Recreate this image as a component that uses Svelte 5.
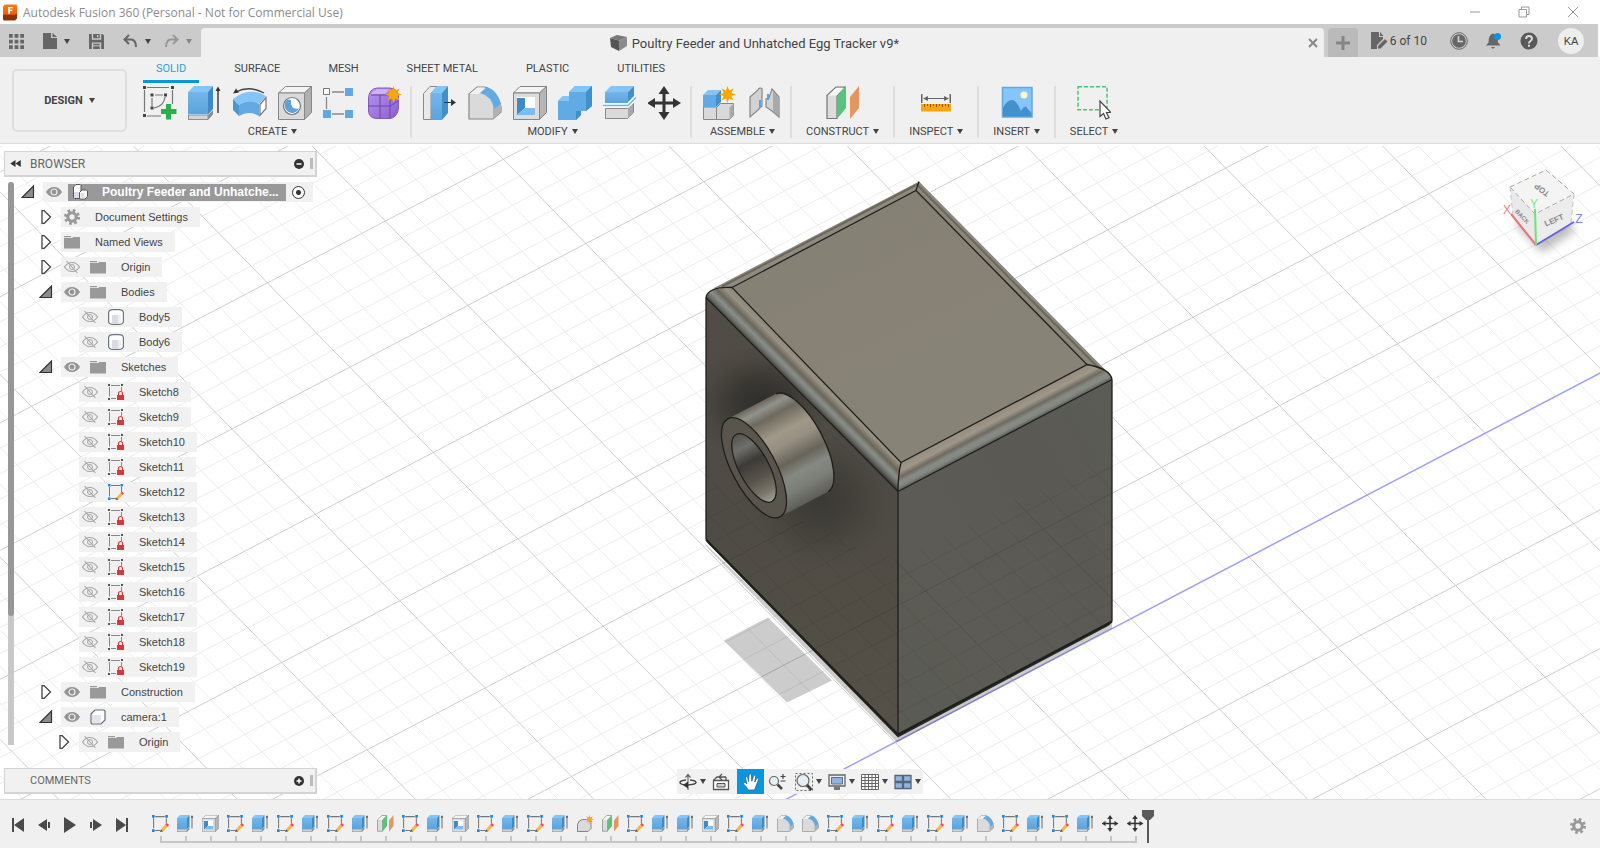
<script lang="ts">
  interface TreeRow {
    /** Text shown beside the icon. */
    label: string;
    /** Nesting level, 0 is the root. */
    depth: number;
    /** Symbol drawn before the label. */
    icon: string;
    /** Expander state, left out for leaf rows. */
    open?: boolean;
    /** Visibility eye, left out for rows that have none. */
    visible?: boolean;
  }

  interface ToolGroup {
    label: string;
    icons: string[];
  }

  const tabs = ['SOLID', 'SURFACE', 'MESH', 'SHEET METAL', 'PLASTIC', 'UTILITIES'];
  let activeTab = $state('SOLID');

  const groups: ToolGroup[] = [
    { label: 'CREATE', icons: ['new-sketch', 'extrude', 'sweep', 'hole', 'pattern', 'form'] },
    { label: 'MODIFY', icons: ['press-pull', 'fillet', 'shell', 'combine', 'split', 'move'] },
    { label: 'ASSEMBLE', icons: ['component-new', 'joint'] },
    { label: 'CONSTRUCT', icons: ['plane'] },
    { label: 'INSPECT', icons: ['measure'] },
    { label: 'INSERT', icons: ['picture'] },
    { label: 'SELECT', icons: ['select'] },
  ];

  const sketches: TreeRow[] = [8, 9, 10, 11, 12, 13, 14, 15, 16, 17, 18, 19].map((n) => ({
    label: `Sketch${n}`,
    depth: 2,
    icon: n === 12 ? 'sketch' : 'sketch-locked',
    visible: false,
  }));

  const rows: TreeRow[] = [
    { label: 'Document Settings', depth: 1, icon: 'gear', open: false },
    { label: 'Named Views', depth: 1, icon: 'folder', open: false },
    { label: 'Origin', depth: 1, icon: 'folder', open: false, visible: false },
    { label: 'Bodies', depth: 1, icon: 'folder', open: true, visible: true },
    { label: 'Body5', depth: 2, icon: 'body', visible: false },
    { label: 'Body6', depth: 2, icon: 'body', visible: false },
    { label: 'Sketches', depth: 1, icon: 'folder', open: true, visible: true },
    ...sketches,
    { label: 'Construction', depth: 1, icon: 'folder', open: false, visible: true },
    { label: 'camera:1', depth: 1, icon: 'component', open: true, visible: true },
    { label: 'Origin', depth: 2, icon: 'folder', open: false, visible: false },
  ];

  // One letter per timeline feature
  const featureIcons: Record<string, string> = {
    k: 'sketch',
    e: 'extrude',
    s: 'shell',
    p: 'plane',
    n: 'form-new',
    f: 'fillet',
    m: 'move',
  };
  const features = [...'keskekekepkeskekenpkeeskeffkekekefkekemm'].map((c) => featureIcons[c]);

  const playback = ['first', 'prev', 'play', 'next', 'last'];

  /**
   * Screen point of a ground grid node. The far cells come out a bit smaller.
   */
  function node(m: number, n: number): [number, number] {
    const k = n / (1 - n * 0.006);
    return [1013 + m * 118 + k * 88, 680 - m * 61.8 + k * 90];
  }

  function gridLine(a: [number, number], b: [number, number]): string {
    return `M${a[0].toFixed(1)} ${a[1].toFixed(1)}L${b[0].toFixed(1)} ${b[1].toFixed(1)}`;
  }

  let minor = '';
  let major = '';
  for (let i = -60; i <= 60; i++) {
    const t = i / 5;
    const line = gridLine(node(t, -14), node(t, 14)) + (i === 0 ? '' : gridLine(node(-14, t), node(14, t)));
    if (i % 5 === 0) major += line;
    else minor += line;
  }
  const axis = gridLine(node(-14, 0), node(14, 0));
</script>

<!-- Symbols shared by the ribbon, the browser tree and the timeline -->
<svg class="sprite" aria-hidden="true">
  <defs>
    <linearGradient id="g-blue" x1="0" y1="0" x2="0" y2="1">
      <stop offset="0" stop-color="#74b6ea" />
      <stop offset="1" stop-color="#5aa3dc" />
    </linearGradient>
    <linearGradient id="g-purple" x1="0" y1="0" x2="1" y2="1">
      <stop offset="0" stop-color="#b894ee" />
      <stop offset="1" stop-color="#8a5fce" />
    </linearGradient>
    <linearGradient id="g-logo" x1="0" y1="0" x2="0" y2="1">
      <stop offset="0" stop-color="#ff7a12" />
      <stop offset="1" stop-color="#e8590c" />
    </linearGradient>
  </defs>

  <symbol id="star" viewBox="0 0 18 18">
    <path fill="#f9a50b" d="M9 0l1.700 4.800L15.400 2.600 13.200 7.300 18 9l-4.800 1.700 2.200 4.700-4.700-2.200L9 18l-1.700-4.800-4.700 2.200 2.200-4.700L0 9l4.800-1.700L2.600 2.600l4.700 2.200z" />
  </symbol>

  <symbol id="new-sketch" viewBox="0 0 34 34">
    <path fill="none" stroke="#777" stroke-width="1.200" d="M4 1.500h22M1.500 4v22M29.500 4v14M4 30h14M12 9h8M9 12v8M22 11q-1 9-11 11" />
    <path fill="#444" d="M0 0h3v3H0zM28 0h3v3h-3zM0 28h3v3H0zM7.500 7.500h3v3h-3zM21 7.500h3v3h-3zM7.500 20.500h3v3h-3z" />
    <path fill="#27b04b" d="M23 18h5v5h5.500v5H28v5.500h-5V28h-5v-5h5z" />
  </symbol>
  <symbol id="extrude" viewBox="0 0 34 34">
    <path fill="#8d8d8d" d="M0 29h20l5-5v4.500L20 34H0z" />
    <path fill="#d4d4d4" d="M1 29.500h18.500v3.500H1z" />
    <path fill="url(#g-blue)" d="M0 6h20v22.500H0z" />
    <path fill="#84c5f7" d="M0 6l6-6h19l-5 6z" />
    <path fill="#3d8cc7" d="M20 6l5-6v23l-5 5.500z" />
    <path fill="#333" d="M29.300 27V5H27.500L30 .500 32.500 5h-1.800v22z" />
  </symbol>
  <symbol id="sweep" viewBox="0 0 34 34">
    <path fill="#4a98d3" d="M0 13l6 6v11l-6-6z" />
    <path fill="#84c5f7" d="M0 13Q16 0 33 10l-7 8q-10-6-20 1z" />
    <path fill="#63aae2" d="M6 19q10-7 20-1v12q-10-6-20 0z" />
    <path fill="#fff" stroke="#777" stroke-width="1.200" d="M27 18.500l6-7v11l-6 7z" />
    <path fill="none" stroke="#444" stroke-width="1.300" d="M3 6Q16-1 31 7" />
    <path fill="#333" d="M0 7.500l3-5 3 4z" />
  </symbol>
  <symbol id="hole" viewBox="0 0 34 34">
    <path fill="#f4f4f4" stroke="#888" d="M.500 7l7-6.500h26l-7 6.500z" />
    <path fill="#b0b0b0" stroke="#888" d="M26.500 7l7-6.500v26l-7 7z" />
    <path fill="#dadada" stroke="#888" d="M.500 7h26v26.500H.500z" />
    <circle cx="14" cy="20" r="8.500" fill="#fff" stroke="#777" stroke-width="1.200" />
    <path fill="#5aa3dc" d="M9 14a7.500 7.500 0 1 0 12 8.500Q12 24 13 14q-2-1-4 0z" />
  </symbol>
  <symbol id="pattern" viewBox="0 0 34 34">
    <path fill="none" stroke="#888" stroke-width="1.300" d="M9 6h12M3.500 11v12M9 28h12" />
    <path fill="#fff" stroke="#777" d="M.500 2.500h6v6h-6z" />
    <path fill="#5fa8e2" d="M22 2h8v8h-8zM0 24h8v8H0zM22 24h8v8h-8z" />
  </symbol>
  <symbol id="form" viewBox="0 0 34 34">
    <path fill="url(#g-purple)" stroke="#8259c4" d="M.500 12Q1 3 9 2h13q8 1 8.500 8v12q-1 9-8 10.500H8Q1 32 .500 25z" />
    <path fill="#cdb2f7" d="M3 8q3-5 8-5h11l-5 5z" />
    <path fill="none" stroke="#6d45ad" d="M0 20h22l8-5M12 9v23M22 10v22M3 9h19" />
    <use href="#star" x="17" y="0" width="17" height="17" />
  </symbol>
  <symbol id="press-pull" viewBox="0 0 34 34">
    <path fill="#e9e9e9" stroke="#888" d="M.500 7.500L7 .500h7l-6 7V33.500H.500z" />
    <path fill="#84c5f7" d="M8 7l6-7h11l-6 7z" />
    <path fill="url(#g-blue)" d="M8 7h11v27H8z" />
    <path fill="#4290cb" d="M19 7l6-7v27l-6 7z" />
    <path fill="#333" d="M21 16h7v-3l5 3.500-5 3.500v-3h-7z" />
  </symbol>
  <symbol id="fillet" viewBox="0 0 34 34">
    <path fill="#dadada" stroke="#858585" stroke-width="1.200" d="M1 33V8l8-7h8q12 4 16 20v5l-8 7z" />
    <path fill="#f1f1f1" d="M1.500 8L9 1.600h8l-6 6.400z" />
    <path fill="#b2b2b2" d="M25 22l8-5v9l-8 7z" />
    <path fill="#62aae4" d="M12 7l7-6q11 4 14 17l-7 5Q24 10 12 7z" />
  </symbol>
  <symbol id="shell" viewBox="0 0 34 34">
    <path fill="#f4f4f4" stroke="#858585" d="M.500 7L7 .500h26.500L26.500 7z" />
    <path fill="#b5b5b5" stroke="#858585" d="M26.500 7l7-6.500v26l-7 7z" />
    <path fill="#dcdcdc" stroke="#858585" d="M.500 7h26v26.500H.500z" />
    <path fill="#fff" d="M4 11h18v18H4z" />
    <path fill="#3d8cc7" d="M4 12h8v10l-8 7z" />
    <path fill="#7abdf2" d="M12 22h10v7H4z" />
  </symbol>
  <symbol id="combine" viewBox="0 0 34 34">
    <path fill="#62aae4" d="M0 15l5-5h6V6l6-6h17v20l-6 5h-5v4l-5 5H0z" />
    <path fill="#84c5f7" d="M11 6l6-6h17l-6 6zM0 15l5-5h6v5z" />
    <path fill="#4290cb" d="M28 6l6-6v20l-6 5zM23 25v4l-5 5v-9z" />
  </symbol>
  <symbol id="split" viewBox="0 0 34 34">
    <path fill="#dadada" stroke="#888" d="M2.500 22.500h22l6-5v9l-6 6h-22z" />
    <path fill="#aaa" d="M25 22l5-4v9l-5 5z" />
    <path fill="#84c5f7" d="M2 6l6-6h23l-6 6z" />
    <path fill="url(#g-blue)" d="M2 6h23v11H2z" />
    <path fill="#4290cb" d="M25 6l6-6v10l-6 6z" />
    <path fill="none" stroke="#fff" stroke-width="4" d="M0 19.500h25l8-8" />
    <path fill="none" stroke="#6bb5ee" stroke-width="1.500" d="M0 19.500h25l8-8" />
  </symbol>
  <symbol id="move" viewBox="0 0 34 34">
    <path fill="#333" d="M16 0l5.500 8h-4v7.500H25V12l8 5-8 5v-3.500h-7.500V26h4L16 34l-5.500-8h4v-7.500H7V22l-8-5 8-5v3.500h7.500V8h-4z" />
  </symbol>
  <symbol id="component-new" viewBox="0 0 34 34">
    <path fill="#d9d9d9" stroke="#888" d="M.500 21h13v12.500H.500zM13.500 21.500l4-4h13v12l-4 4h-13z" />
    <path fill="#aaa" d="M26.500 21.500l4-4v12l-4 4z" />
    <path fill="#84c5f7" d="M0 9l5-5h13l-5 5z" />
    <path fill="#62aae4" d="M0 9h13v12H0z" />
    <path fill="#4290cb" d="M13 9l5-5v12l-5 5z" />
    <use href="#star" x="16" y="0" width="17" height="17" />
  </symbol>
  <symbol id="joint" viewBox="0 0 34 34">
    <path fill="#d2d2d2" stroke="#888" stroke-width="1.200" d="M2 11l8-7q1-3 4-1.500V20l-4 4-8 7zM31 31l-7-6-6-4v-8l3-1 3-9 7 8z" />
    <path fill="#a9a9a9" d="M25 6l5.500 5v19L25 25z" />
    <path fill="#5aa3dc" d="M11 14h2v8h-2zM19 8h2v6h-2z" />
  </symbol>
  <symbol id="plane" viewBox="0 0 34 34">
    <path fill="#dcdcdc" stroke="#777" stroke-width="1.200" d="M1 9.500L10 1h9l-8 9v22.500H1z" />
    <path fill="#f8f8f8" d="M2 9.500L10 2h8l-7.500 7.500z" />
    <path fill="#58c37b" d="M11 10l9-10v22l-9 11z" />
    <path fill="#e59560" d="M24 11l9-11v22l-9 11z" />
  </symbol>
  <symbol id="measure" viewBox="0 0 34 34">
    <path fill="#666" d="M2 8h1.500v9H2zM30.500 8H32v9h-1.500zM4 12.500L9 10v2h16v-2l5 2.500-5 2.500v-2H9v2z" />
    <path fill="#f9a50b" d="M2 18h30v7.500H2z" />
    <path stroke="#8a5a00" stroke-width="1" d="M5.500 18v3M8.500 18v2M11.500 18v3M14.500 18v2M17.500 18v3M20.500 18v2M23.500 18v3M26.500 18v2M29.500 18v3" />
  </symbol>
  <symbol id="picture" viewBox="0 0 34 34">
    <path fill="#86c5fa" stroke="#62a9e2" stroke-width="1.500" d="M2.500 1.500h29.500v29.500H2.500z" />
    <path fill="#4291cd" d="M3 22q4-8 9-8 5 1 9 11l2-3q3-3 4 0l4.500 5v3.500H3z" />
    <circle cx="24" cy="9" r="3.500" fill="#fdf7cf" />
  </symbol>
  <symbol id="select" viewBox="0 0 34 34">
    <path fill="none" stroke="#43c771" stroke-width="1.500" stroke-dasharray="4 2" d="M1 .800h29v23H1z" />
    <path fill="#fff" stroke="#444" stroke-width="1.200" d="M23 15v15.500l3.500-3 2.500 5.500 3-1.300-2.500-5.200h4.500z" />
  </symbol>
  <symbol id="form-new" viewBox="0 0 34 34">
    <path fill="#dadada" stroke="#858585" stroke-width="2" d="M1 33V19q2-9 10-10h12q5 1 5 6v12l-6 6z" />
    <use href="#star" x="16" y="0" width="18" height="18" />
  </symbol>
  <symbol id="sketch" viewBox="0 0 16 16">
    <path fill="none" stroke="#777" d="M3 1.500h9M1.500 3v9.500M13.500 3v5M3 14.500h5" />
    <path fill="#1b87dd" d="M0 0h2.500v2.500H0zM12.500 0H15v2.500h-2.500zM0 13.500h2.500V16H0z" />
    <path fill="#fbb53c" d="M8.500 13.500l4-4.500 2 2-4 4.500z" />
    <path fill="#f0485c" d="M12.500 9l1.500-1.500L16 9.500 14.500 11z" />
    <path fill="#555" d="M8.500 13.500l2 2-3 .500z" />
  </symbol>
  <symbol id="sketch-locked" viewBox="0 0 16 16">
    <path fill="none" stroke="#888" d="M3 1.500h9M1.500 3v9.500M13.500 3v4M3 14.500h5" />
    <path fill="#555" d="M0 0h2v2H0zM13 0h2v2h-2zM0 14h2v2H0z" />
    <path fill="#d33a40" d="M9 11h7v5H9z" />
    <path fill="none" stroke="#d33a40" stroke-width="1.200" d="M10.500 11V9.500a2 2 0 0 1 4 0V11" />
  </symbol>
  <symbol id="gear" viewBox="0 0 16 16">
    <circle cx="8" cy="8" r="6.500" fill="none" stroke="#999" stroke-width="3" stroke-dasharray="2.550 2.550" />
    <circle cx="8" cy="8" r="4.200" fill="none" stroke="#999" stroke-width="3" />
  </symbol>
  <symbol id="folder" viewBox="0 0 16 16">
    <path fill="#999" d="M0 2h7v1.200H0zM0 4h8l1.500-1H16v11.500H0z" />
  </symbol>
  <symbol id="body" viewBox="0 0 16 16">
    <path fill="#fff" stroke="#6c7483" stroke-width="1.200" d="M.600 3.500Q1 .600 5 .600h6q4 0 4.400 2.900v9q-.400 2.900-4.400 2.900H5q-4 0-4.400-2.900z" />
    <path fill="#d9dce4" d="M4 6h6v8H4z" />
    <path fill="#eceef2" d="M10 6h3v7l-3 1z" />
  </symbol>
  <symbol id="component" viewBox="0 0 16 16">
    <path fill="#fff" stroke="#666d78" stroke-width="1.200" d="M1 5l4-4h9l1 1v9l-4 4H2l-1-1z" />
    <path fill="#e3e5ea" d="M2 6h9v8H2z" />
  </symbol>
  <symbol id="components" viewBox="0 0 16 16">
    <path fill="#fff" stroke="#555" d="M1.500 3l2.500-2.500h4L9 1.500V14.500H2.500l-1-1z" />
    <path fill="#fff" stroke="#555" d="M7.500 8.500L10 6h4.500l1 1v5.500l-2.500 2.500H8.500l-1-1z" />
    <path fill="#dcdfe6" d="M2 8h5v6H2zM8.500 9h4v5.500h-4z" />
  </symbol>
  <symbol id="eye" viewBox="0 0 16 16">
    <path fill="#949494" d="M0 8q3-5 8-5t8 5q-3 5-8 5T0 8z" />
    <circle cx="8" cy="8" r="3" fill="none" stroke="#eee" stroke-width="1.200" />
  </symbol>
  <symbol id="eye-off" viewBox="0 0 16 16">
    <path fill="none" stroke="#a5a5a5" stroke-width="1.100" d="M.500 8Q3.500 3.500 8 3.500T15.500 8q-3 4.500-7.500 4.500T.500 8zM2.500 2l11 12" />
    <circle cx="8" cy="8" r="2.500" fill="none" stroke="#a5a5a5" />
  </symbol>
  <symbol id="first" viewBox="0 0 16 16"><path fill="#4a4a4a" d="M2 1h2v14H2zM14 1v14L4 8z" /></symbol>
  <symbol id="prev" viewBox="0 0 16 16"><path fill="#4a4a4a" d="M11 2v12L2 8zM12 5h2v6h-2z" /></symbol>
  <symbol id="play" viewBox="0 0 16 16"><path fill="#4a4a4a" d="M2 0l12 8-12 8z" /></symbol>
  <symbol id="next" viewBox="0 0 16 16"><path fill="#4a4a4a" d="M5 2v12l9-6zM2 5h2v6H2z" /></symbol>
  <symbol id="last" viewBox="0 0 16 16"><path fill="#4a4a4a" d="M12 1h2v14h-2zM2 1v14l10-7z" /></symbol>
</svg>

{#snippet icon(name: string)}
  <svg class="icon" aria-hidden="true"><use href="#{name}" /></svg>
{/snippet}

<div class="app">
  <header class="titlebar">
    <svg class="logo" viewBox="0 0 16 17" aria-hidden="true">
      <path fill="url(#g-logo)" d="M2 0h12l1 1v11l-3 1H0V2z" />
      <path fill="#8b3306" d="M0 11h12l3-1v5l-2 2H1l-1-1z" />
      <path fill="#fff" d="M5.500 2.500h5V4h-3v1.500h2.500V7H7.500v2.500h-2z" />
    </svg>
    <span class="app-name">Autodesk Fusion 360 (Personal - Not for Commercial Use)</span>
    <div class="window-buttons">
      <button aria-label="Minimize"><svg viewBox="0 0 12 12"><path d="M1 6h10" /></svg></button>
      <button aria-label="Restore"><svg viewBox="0 0 12 12"><path d="M1 3.500h7.500V11H1zM3.500 3.500V1H11v7.500H8.500" /></svg></button>
      <button aria-label="Close"><svg viewBox="0 0 12 12"><path d="M1 1l10 10M11 1L1 11" /></svg></button>
    </div>
  </header>

  <div class="tabbar">
    <div class="quick">
      <button aria-label="Data panel">
        <svg width="15" height="15" viewBox="0 0 16 16"><path fill="#666" d="M0 0h4v4H0zM6 0h4v4H6zM12 0h4v4h-4zM0 6h4v4H0zM6 6h4v4H6zM12 6h4v4h-4zM0 12h4v4H0zM6 12h4v4H6zM12 12h4v4h-4z" /></svg>
      </button>
      <button aria-label="File">
        <svg width="14" height="16" viewBox="0 0 14 16"><path fill="#666" d="M0 0h8v5h6v11H0zM9.500 0L14 4H9.500z" /></svg>
        <span class="caret"></span>
      </button>
      <button aria-label="Save">
        <svg width="15" height="15" viewBox="0 0 16 16"><path fill="#666" fill-rule="evenodd" d="M0 0h3v6h10V0h1.500L16 1.500V16h-3V9H3v7H0zM4.500 0h7v4.500h-7zM8.500 1v2.500H10V1zM4.500 10.500h7V12h-7zM4.500 13h7v3h-7z" /></svg>
      </button>
      <button aria-label="Undo">
        <svg width="15" height="14" viewBox="0 0 15 14"><path fill="none" stroke="#666" stroke-width="2" d="M6 1L1.500 5.500 6 10M2 5.500h6q5 0 5 7.500" /></svg>
        <span class="caret"></span>
      </button>
      <button class="faded" aria-label="Redo">
        <svg width="15" height="14" viewBox="0 0 15 14"><path fill="none" stroke="#666" stroke-width="2" d="M9 1l4.500 4.500L9 10M13 5.500H7q-5 0-5 7.500" /></svg>
        <span class="caret"></span>
      </button>
    </div>

    <div class="doc-tab">
      <span class="doc-name">
        <svg width="17" height="16" viewBox="0 0 17 16" aria-hidden="true">
          <path fill="#555" d="M0 3l9 2.500V16l-8-4z" /><path fill="#777" d="M0 3l7-3 10 2-8 3.500z" /><path fill="#8c8c8c" d="M9 5.500L17 2v9l-8 5z" />
        </svg>
        Poultry Feeder and Unhatched Egg Tracker v9*
      </span>
      <button aria-label="Close tab"><svg width="10" height="10" viewBox="0 0 10 10"><path stroke="#888" stroke-width="2" d="M1 1l8 8M9 1L1 9" /></svg></button>
    </div>
    <button class="new-tab" aria-label="New tab"><svg width="14" height="14" viewBox="0 0 14 14"><path stroke="#858585" stroke-width="3" d="M7 0v14M0 7h14" /></svg></button>

    <div class="account">
      <button class="quota">
        <svg width="17" height="17" viewBox="0 0 17 17"><path fill="#666" d="M0 0h8v5h4v2l-6 6v4H0zM9 0l3.500 4H9zM7 14l7-7 2.500 2.500-7 7H7z" /></svg>
        6 of 10
      </button>
      <button aria-label="Job status"><svg width="18" height="18" viewBox="0 0 18 18"><circle cx="9" cy="9" r="8.300" fill="none" stroke="#666" /><circle cx="9" cy="9" r="6.800" fill="#666" /><path fill="none" stroke="#d2d2d2" stroke-width="1.700" d="M8.500 4v5.500H13" /></svg></button>
      <button aria-label="Notifications"><svg width="18" height="18" viewBox="0 0 18 18"><path fill="#666" d="M1 13.500l2.500-3q0-8 4.500-9 5 1 5 9l2.500 3zM6 15h4q-2 3.500-4 0z" /><circle cx="12.500" cy="4.500" r="3.500" fill="#0a96dd" /></svg></button>
      <button aria-label="Help"><svg width="18" height="18" viewBox="0 0 18 18"><circle cx="9" cy="9" r="8.500" fill="#595959" /><path fill="none" stroke="#ddd" stroke-width="2" d="M6 7q.300-3 3-3t3 2.500q0 1.500-1.500 2.500T9 11.500M9 12.800v2" /></svg></button>
      <button class="avatar">KA</button>
    </div>
  </div>

  <div class="ribbon">
    <button class="workspace">DESIGN <span class="caret"></span></button>
    <div class="tools">
      <nav class="tabs">
        {#each tabs as tab}
          <button class:active={tab === activeTab} onclick={() => (activeTab = tab)}>{tab}</button>
        {/each}
      </nav>
      <div class="groups">
        {#each groups as group}
          <section class="group">
            <div class="group-icons">
              {#each group.icons as name}
                <button aria-label={name}>{@render icon(name)}</button>
              {/each}
            </div>
            <button class="group-label">{group.label}<span class="caret"></span></button>
          </section>
        {/each}
      </div>
    </div>
  </div>

  <main class="canvas">
    <!-- Ground grid and the model -->
    <svg class="scene" viewBox="0 145 1600 654" preserveAspectRatio="xMidYMid slice" aria-hidden="true">
      <defs>
        <linearGradient id="m-top" x1="0" y1="0" x2="0.600" y2="1">
          <stop offset="0" stop-color="#848074" /><stop offset="0.500" stop-color="#888276" /><stop offset="1" stop-color="#878377" />
        </linearGradient>
        <linearGradient id="m-left" x1="0" y1="0" x2="0" y2="1">
          <stop offset="0" stop-color="#514d46" /><stop offset="0.500" stop-color="#4e4b44" /><stop offset="1" stop-color="#555148" />
        </linearGradient>
        <linearGradient id="m-right" x1="1" y1="0" x2="0" y2="1">
          <stop offset="0" stop-color="#5a5c55" /><stop offset="0.300" stop-color="#5b5954" /><stop offset="0.700" stop-color="#5c5b55" /><stop offset="1" stop-color="#595b54" />
        </linearGradient>
        <radialGradient id="m-shade">
          <stop offset="0" stop-color="#2f2d2a" /><stop offset="0.400" stop-color="#2f2d2a" stop-opacity="0.650" /><stop offset="0.750" stop-color="#2f2d2a" stop-opacity="0.180" /><stop offset="1" stop-color="#2f2d2a" stop-opacity="0" />
        </radialGradient>
        <linearGradient id="m-edge-l" gradientUnits="userSpaceOnUse" x1="800" y1="392" x2="817" y2="375">
          <stop offset="0" stop-color="#3d3d39" /><stop offset="0.150" stop-color="#686a65" /><stop offset="0.350" stop-color="#8b8f89" /><stop offset="0.580" stop-color="#6b665b" /><stop offset="0.850" stop-color="#999386" /><stop offset="1" stop-color="#8f897c" />
        </linearGradient>
        <linearGradient id="m-edge-r" gradientUnits="userSpaceOnUse" x1="1000" y1="437" x2="989" y2="416">
          <stop offset="0" stop-color="#62635e" /><stop offset="0.150" stop-color="#858781" /><stop offset="0.300" stop-color="#888b85" /><stop offset="0.480" stop-color="#6f6a60" /><stop offset="0.700" stop-color="#9e978a" /><stop offset="1" stop-color="#938c7f" />
        </linearGradient>
        <linearGradient id="m-tube" gradientUnits="userSpaceOnUse" x1="752" y1="406" x2="804" y2="504">
          <stop offset="0" stop-color="#6c675d" /><stop offset="0.070" stop-color="#92928c" /><stop offset="0.160" stop-color="#6e695e" /><stop offset="0.330" stop-color="#a09989" /><stop offset="0.440" stop-color="#968f83" /><stop offset="0.600" stop-color="#68645a" /><stop offset="0.720" stop-color="#868882" /><stop offset="0.850" stop-color="#7b7d77" /><stop offset="1" stop-color="#5d5d57" />
        </linearGradient>
        <!-- Runs along the long axis of the rotated ellipse -->
        <linearGradient id="m-bore">
          <stop offset="0" stop-color="#55534d" /><stop offset="0.200" stop-color="#6d6f6a" /><stop offset="0.400" stop-color="#3d3b37" /><stop offset="0.650" stop-color="#57534b" /><stop offset="0.850" stop-color="#7a7468" /><stop offset="1" stop-color="#a0a29c" />
        </linearGradient>
        <clipPath id="c-left"><path d="M706 297L898 491v243L706 539z" /></clipPath>
        <clipPath id="c-low"><path d="M706 480l192 80 214-110v171L898 734 706 539z" /></clipPath>
      </defs>

      <path class="minor" d={minor} />
      <path class="major" d={major} />
      <path class="axis" d={axis} />

      <path fill="#000" opacity="0.200" d="M704 542l4 6 189 194 215-114v-8L898 730z" />
      <path fill="#000" opacity="0.200" d="M724 640l44-23 64 63-45 22z" />

      <path fill="#2c2b27" d="M706 539q0 3 3 5l189 193 211-112q3-2 3-5z" />
      <path fill="url(#m-left)" d="M706 297L898 491v243L706 539z" />
      <g clip-path="url(#c-left)">
        <ellipse cx="762" cy="402" rx="72" ry="58" fill="url(#m-shade)" />
        <ellipse cx="822" cy="498" rx="72" ry="72" fill="url(#m-shade)" opacity="0.600" />
      </g>
      <path fill="url(#m-right)" d="M898 491l214-112v242L898 734z" />
      <g clip-path="url(#c-low)" opacity="0.120">
        <path class="on-model thin" d={minor} />
        <path class="on-model" d={major} />
      </g>

      <path fill="#8e8a7f" d="M713 288l206-107-3 9-184 97z" />
      <path fill="#8b877b" d="M919 181l187 189-19-6L916 190z" />
      <path fill="none" stroke="#6b675d" stroke-width="2" d="M722 286l195-102 182 184" />
      <path fill="url(#m-top)" d="M732 287l184-97 171 174-186 98z" />
      <path fill="url(#m-edge-l)" d="M706 297q2-11 26-10l169 175q-3 12-3 29z" />
      <path fill="url(#m-edge-r)" d="M901 462l186-98q23 4 25 15L898 491q0-17 3-29z" />
      <path class="edge" d="M732 287l184-97 171 174-186 98zM916 190l3-9M706 297L898 491l214-112M901 462q-3 12-3 29v243M706 539V297q2-11 26-10M1087 364q23 4 25 15v242" />
      <path class="edge bottom" d="M706 539l192 195 214-113" />

      <path fill="url(#m-tube)" d="M728 418.300L776 393.300A55.500 21.900 61.900 0 1 828 491.300L780 516.300z" />
      <path class="edge" d="M776 393.300A55.500 21.900 61.900 0 1 828 491.300" />
      <ellipse class="edge ring" cx="754" cy="467.300" rx="55.500" ry="21.900" transform="rotate(61.900 754 467.300)" />
      <ellipse fill="url(#m-bore)" stroke="#1e1e1b" stroke-width="1.300" cx="754" cy="467.500" rx="38" ry="15" transform="rotate(61.900 754 467.500)" />
    </svg>

    <svg class="view-cube" viewBox="1500 160 100 100" role="img" aria-label="View cube">
      <defs><filter id="cube-shadow" x="-30%" y="-30%" width="160%" height="160%"><feGaussianBlur stdDeviation="4" /></filter></defs>
      <path fill="#000" opacity="0.250" filter="url(#cube-shadow)" d="M1514 222l28 30 34-22-20-20z" />
      <path fill="#e9e9e9" d="M1510 186l25 27 1 31-23-29z" />
      <path fill="#ececec" d="M1535 213l39-20-3 29-35 22z" />
      <path fill="#f4f4f4" stroke="#aaa" stroke-dasharray="5 3" d="M1510 186l36-17 28 24-39 20z" />
      <path fill="none" stroke="#c4c4c4" stroke-dasharray="5 3" d="M1510 186l3 29M1574 193l-3 29" />
      <path stroke="#e87474" stroke-width="2" d="M1536 244l-25-31" />
      <path stroke="#6464e0" stroke-width="2" d="M1536 244l38-23" />
      <path stroke="#72e072" stroke-width="2" d="M1536 244l-1-36" />
      <text class="face" x="1541" y="190" transform="rotate(218 1541 190)" dy="4">TOP</text>
      <text class="face small" x="1523" y="215" transform="rotate(46 1523 215)" dy="3">BACK</text>
      <text class="face" x="1554" y="219" transform="rotate(-22 1554 219)" dy="3">LEFT</text>
      <text x="1507" y="213" fill="#f08080">X</text>
      <text x="1534" y="207" fill="#7be87b">Y</text>
      <text x="1579" y="222" fill="#8080f0">Z</text>
    </svg>

    <aside class="side">
      <div class="panel-header">
        <svg class="collapse" viewBox="0 0 12 8" aria-hidden="true"><path fill="#333" d="M6 0v8L0 4zM12 0v8L6 4z" /></svg>
        <span>BROWSER</span>
        <button aria-label="Collapse browser"><svg viewBox="0 0 10 10"><circle cx="5" cy="5" r="5" fill="#333" /><path stroke="#fff" stroke-width="1.500" d="M2.500 5h5" /></svg></button>
      </div>

      <div class="tree">
        <div class="scrollbar"><div class="thumb"></div></div>
        <ul>
          <li>
            <button class="toggle" aria-label="Collapse"><svg viewBox="0 0 14 14"><path class="opened" d="M1 12.500L12.500 1v11.500z" /></svg></button>
            <div class="entry root">
              {@render icon('eye')}
              <span class="selected">{@render icon('components')}<b>Poultry Feeder and Unhatche...</b></span>
              <input type="radio" checked aria-label="Activate component" />
            </div>
          </li>
          {#each rows as row}
            <li style:padding-left="{row.depth * 18}px">
              {#if row.open === undefined}
                <span class="toggle"></span>
              {:else}
                <button class="toggle" aria-label={row.open ? 'Collapse' : 'Expand'}>
                  <svg viewBox="0 0 14 14">
                    {#if row.open}
                      <path class="opened" d="M1 12.500L12.500 1v11.500z" />
                    {:else}
                      <path class="closed" d="M3 .500h2L11.500 7 5 13.500H3z" />
                    {/if}
                  </svg>
                </button>
              {/if}
              <div class="entry">
                {#if row.visible !== undefined}
                  {@render icon(row.visible ? 'eye' : 'eye-off')}
                {/if}
                {@render icon(row.icon)}
                <span class="name">{row.label}</span>
              </div>
            </li>
          {/each}
        </ul>
      </div>

      <div class="panel-header comments">
        <span>COMMENTS</span>
        <button aria-label="Expand comments"><svg viewBox="0 0 10 10"><circle cx="5" cy="5" r="5" fill="#333" /><path stroke="#fff" stroke-width="1.500" d="M2.500 5h5M5 2.500v5" /></svg></button>
      </div>
    </aside>

    <div class="navbar">
      <button aria-label="Orbit">
        <svg viewBox="0 0 18 18"><path fill="none" stroke="#666" stroke-width="1.200" d="M9 2v15M6.500 4.500L9 1.500l2.500 3" /><path fill="none" stroke="#444" stroke-width="1.400" d="M7 7q-6 .500-6 2.500T7 12M11 7q6 .500 6 2.500T8 12" /><path fill="#333" d="M4 12l5-3.500v7z" /></svg>
        <span class="caret"></span>
      </button>
      <button aria-label="Look at">
        <svg viewBox="0 0 18 18"><path fill="#fff" stroke="#555" stroke-width="1.300" d="M1.500 7.500h15v9h-15z" /><path fill="#c9cdd8" stroke="#555" d="M5 10.500h8v3.500H5z" /><path fill="none" stroke="#555" stroke-width="1.300" d="M1.500 7.500L5 4h9M10 1L7 4l3 3M14 4v3" /></svg>
      </button>
      <button class="on" aria-label="Pan">
        <svg viewBox="0 0 18 18"><path fill="#fff" stroke="#24658d" stroke-width=".800" d="M6 17q-1-3-4.500-6-1-1.500.500-1.800Q4 9.500 5 11L3.500 5q0-1.500 1.200-1.500T6.500 8.500L7 2q.200-1.400 1.200-1.300T9.500 2l.300 6.200L11.500 3q.500-1.200 1.500-.800t.700 1.500L12.700 9l2-3.500q.800-.900 1.500-.200t.200 1.600L14.500 12 12.500 17z" /></svg>
      </button>
      <button aria-label="Zoom">
        <svg viewBox="0 0 18 18"><circle cx="6" cy="8" r="4.500" fill="#e4f0f2" stroke="#666" stroke-width="1.200" /><path stroke="#444" stroke-width="2.500" d="M9.500 11.500L14 16" /><path stroke="#444" stroke-width="1.200" d="M12.500 3.500h5M15 1v5M12.500 8h5" /></svg>
      </button>
      <button aria-label="Fit">
        <svg viewBox="0 0 18 18"><path fill="none" stroke="#666" stroke-dasharray="2 2" d="M.500.500h17v17H.500z" /><circle cx="8" cy="7.500" r="6" fill="#e4f0f2" stroke="#666" stroke-width="1.200" /><path stroke="#444" stroke-width="3" d="M12 12l4.500 5" /></svg>
        <span class="caret"></span>
      </button>
      <button aria-label="Display settings">
        <svg viewBox="0 0 18 18"><path fill="#eee" stroke="#666" stroke-width="1.300" d="M1 2h16v11H1z" /><path fill="#8fb4e0" stroke="#5a6f8c" d="M3.500 4.500h11v6.500h-11z" /><path fill="#777" d="M6 13.500h6V17H6z" /></svg>
        <span class="caret"></span>
      </button>
      <button aria-label="Grid and snaps">
        <svg viewBox="0 0 18 18"><path fill="#fff" stroke="#666" d="M.500 1.500h17v15H.500zM4 1.500v15M7.500 1.500v15M11 1.500v15M14.500 1.500v15M.500 4.500h17M.500 7.500h17M.500 10.500h17M.500 13.500h17" /></svg>
        <span class="caret"></span>
      </button>
      <button aria-label="Viewports">
        <svg viewBox="0 0 18 18"><path fill="#8fb4de" stroke="#55647c" stroke-width="1.300" d="M1 2.500h7.500v6H1zM9.500 2.500H17v6H9.500zM1 9.500h7.500v6H1zM9.500 9.500H17v6H9.500z" /></svg>
        <span class="caret"></span>
      </button>
    </div>
  </main>

  <footer class="timeline">
    <div class="playback">
      {#each playback as name}
        <button aria-label={name}>{@render icon(name)}</button>
      {/each}
    </div>
    <div class="track">
      <ol>
        {#each features as name}
          <li>{@render icon(name)}</li>
        {/each}
      </ol>
      <svg class="playhead" viewBox="0 0 12 33" aria-hidden="true"><path fill="#595959" d="M0 0h12v6L8 10H7v23H5V10H4L0 6z" /></svg>
    </div>
    <button class="settings" aria-label="Timeline settings">{@render icon('gear')}</button>
  </footer>
</div>

<style>
  :global(body) {
    background: #fff;
  }

  .app {
    display: flex;
    flex-direction: column;
    min-height: 100vh;
    font-family: "Liberation Sans", Arial, sans-serif;
    font-size: 11px;
    color: #444;
  }

  .sprite {
    position: absolute;
    width: 0;
    height: 0;
  }

  button {
    display: flex;
    align-items: center;
    justify-content: center;
    padding: 0;
    border: 0;
    background: none;
    color: inherit;
    font: inherit;
  }

  svg {
    flex: none;
    display: block;
  }

  .icon {
    width: 16px;
    height: 16px;
    overflow: visible;
  }

  .caret {
    border: 3px solid transparent;
    border-top: 5px solid #444;
    border-bottom: 0;
  }

  /* Title bar */
  .titlebar {
    display: flex;
    align-items: center;
    height: 24px;
    padding: 0 3px;
    font-family: "Open Sans", sans-serif;
    font-size: 12px;
    color: #8c8c8c;
  }

  .logo {
    width: 15px;
    height: 17px;
    margin-right: 5px;
  }

  .window-buttons {
    display: flex;
    margin-left: auto;
  }

  .window-buttons button {
    width: 49px;
    height: 24px;
  }

  .window-buttons svg {
    width: 12px;
    height: 12px;
    fill: none;
    stroke: #999;
  }

  /* Document tabs */
  .tabbar {
    display: flex;
    height: 29px;
    margin-right: 2px;
    padding-top: 4px;
    background: #cbcbcb;
  }

  .quick {
    display: flex;
    align-items: center;
    width: 192px;
    padding: 0 0 3px 9px;
  }

  .quick button {
    gap: 7px;
    margin-right: 19px;
  }

  .quick button:nth-child(4) {
    margin-right: 13px;
  }

  .quick button:last-child {
    margin-right: 0;
  }

  .faded {
    opacity: 0.5;
  }

  .doc-tab {
    flex: 1;
    display: flex;
    align-items: center;
    padding: 1px 6px 0 0;
    border-radius: 4px 4px 0 0;
    background: #f0f0f0;
    font-family: Roboto, sans-serif;
    font-size: 13px;
  }

  .doc-name {
    flex: 1;
    display: flex;
    align-items: center;
    justify-content: center;
    gap: 5px;
  }

  .new-tab {
    width: 30px;
    margin-left: 4px;
    border-radius: 4px 4px 0 0;
    background: #bababa;
  }

  .account {
    display: flex;
    align-items: center;
    gap: 17px;
    padding: 0 14px 4px 13px;
    font-size: 12px;
  }

  .quota {
    gap: 2px;
    margin-right: 6px;
    font-family: Roboto, sans-serif;
  }

  .avatar {
    width: 26px;
    height: 26px;
    margin-left: 3px;
    border-radius: 50%;
    background: #eee;
    font-size: 11px;
  }

  /* Ribbon */
  .ribbon {
    display: flex;
    height: 86px;
    margin-bottom: 2px;
    border-bottom: 1px solid #dcdcdc;
    background: #f0f0f0;
    font-family: Roboto, sans-serif;
    font-size: 11px;
  }

  .workspace {
    gap: 6px;
    width: 115px;
    height: 63px;
    margin: 12px 16px 0 12px;
    border: 2px solid #dedede;
    border-radius: 5px;
    font-weight: 700;
  }

  .tabs {
    display: flex;
    gap: 22px;
  }

  .tabs button {
    height: 26px;
    padding: 0 13px;
    border-bottom: 3px solid transparent;
  }

  .tabs .active {
    border-color: #0a96dd;
    color: #2aa0e0;
  }

  .groups {
    display: flex;
    padding-top: 3px;
  }

  .group {
    display: flex;
    flex-direction: column;
    align-items: center;
    gap: 5px;
    height: 52px;
    padding: 0 14px;
    border-right: 2px solid #dedede;
  }

  .group:nth-child(-n + 3) {
    padding: 0 8px 0 11px;
  }

  .group:first-child {
    padding-left: 0;
  }

  .group:last-child {
    border: 0;
  }

  .group-icons {
    display: flex;
    gap: 11px;
  }

  .group-icons .icon {
    width: 34px;
    height: 34px;
  }

  .group-label {
    gap: 4px;
    height: 14px;
  }

  /* Canvas */
  .canvas {
    position: relative;
    flex: 1;
    display: flex;
    overflow: hidden;
  }

  .scene {
    position: absolute;
    inset: 0;
    width: 100%;
    height: 100%;
  }

  .minor,
  .major,
  .axis,
  .on-model {
    fill: none;
    stroke: #ececec;
  }

  .major {
    stroke: #cfcfcf;
  }

  .axis {
    stroke: #a0a0f8;
    stroke-width: 1.5;
  }

  .on-model {
    stroke: #000;
  }

  .thin {
    stroke-opacity: 0.5;
  }

  .edge {
    fill: none;
    stroke: #1e1e1b;
    stroke-width: 1.3;
  }

  .ring {
    fill: #59554c;
  }

  .bottom {
    stroke-width: 2;
  }

  .view-cube {
    position: absolute;
    top: 15px;
    right: 0;
    width: 100px;
    height: 100px;
    font-size: 12px;
    text-anchor: middle;
  }

  .face {
    fill: #888;
    font-size: 8px;
    font-weight: 700;
  }

  .small {
    font-size: 6px;
  }

  .side {
    position: relative;
    display: flex;
    flex-direction: column;
    width: 313px;
    padding: 5px 0 5px 4px;
  }

  .panel-header {
    box-sizing: border-box;
    display: flex;
    align-items: center;
    height: 26px;
    padding: 0 2px 0 5px;
    border: 1px solid #d4d4d4;
    border-width: 1px 2px 2px 1px;
    background: #f1f1f1;
    font-family: Roboto, sans-serif;
    font-size: 12px;
    color: #666;
  }

  .panel-header button {
    margin-left: auto;
    padding-right: 6px;
    border-right: 3px solid #bbb;
    height: 11px;
  }

  .panel-header button svg {
    width: 10px;
    height: 10px;
  }

  .collapse {
    width: 11px;
    height: 7px;
    margin-right: 9px;
  }

  .comments {
    margin-top: auto;
    padding-left: 25px;
    font-size: 11px;
  }

  .tree {
    display: flex;
    margin-top: 5px;
  }

  .scrollbar {
    width: 6px;
    height: 563px;
    margin: 0 3px 0 4px;
    border-radius: 3px 3px 0 0;
    background: #c8c8c8;
  }

  .thumb {
    height: 77%;
    border-radius: 3px;
    background: #979797;
  }

  ul,
  ol {
    margin: 0;
    padding: 0;
    list-style: none;
  }

  ul {
    display: flex;
    flex-direction: column;
    gap: 5px;
  }

  .tree li {
    display: flex;
    align-items: center;
    height: 20px;
  }

  .toggle {
    width: 22px;
    margin-right: 4px;
  }

  .toggle svg {
    width: 14px;
    height: 14px;
  }

  .opened {
    fill: #8c8c8c;
    stroke: #333;
    stroke-width: 1.2;
  }

  .closed {
    fill: #fff;
    stroke: #444;
    stroke-width: 1.3;
  }

  .entry {
    display: flex;
    align-items: center;
    gap: 10px;
    height: 20px;
    padding: 0 12px 0 3px;
    background: #f1f1f1;
  }

  .name {
    margin-left: 5px;
  }

  .root {
    gap: 6px;
    padding-right: 8px;
  }

  .selected {
    display: flex;
    align-items: center;
    gap: 14px;
    width: 214px;
    height: 17px;
    padding-left: 4px;
    background: #999;
    color: #fff;
    font-size: 12px;
    white-space: nowrap;
  }

  .root input {
    appearance: none;
    box-sizing: border-box;
    width: 13px;
    height: 13px;
    margin: 0;
    border: 1px solid #333;
    border-radius: 50%;
    background: radial-gradient(#333 0 2px, #fff 3px);
  }

  .navbar {
    position: absolute;
    bottom: 5px;
    left: 50%;
    display: flex;
    gap: 2px;
    height: 25px;
    background: #f1f1f1;
    transform: translateX(-50%);
  }

  .navbar button {
    gap: 3px;
    padding: 0 2px;
  }

  .navbar .on {
    width: 27px;
    margin-left: 3px;
    background: #0a96dd;
  }

  .navbar .on + button {
    margin-right: 3px;
  }

  .navbar svg {
    width: 18px;
    height: 18px;
  }

  /* Timeline */
  .timeline {
    display: flex;
    align-items: center;
    height: 48px;
    border-top: 1px solid #dcdcdc;
    background: #f0f0f0;
  }

  .playback {
    display: flex;
    gap: 10px;
    width: 138px;
    padding: 2px 0 0 10px;
  }

  .track {
    position: relative;
    align-self: flex-end;
    margin-bottom: 5px;
  }

  .track::after {
    position: absolute;
    right: 12px;
    bottom: 0;
    left: 12px;
    height: 2px;
    background: #c6c6c6;
    content: "";
  }

  .track ol {
    display: flex;
    height: 28px;
  }

  .track li {
    position: relative;
    display: flex;
    justify-content: center;
    width: 25px;
  }

  .track li::after {
    position: absolute;
    bottom: 0;
    left: 12px;
    width: 2px;
    height: 7px;
    background: #c6c6c6;
    content: "";
  }

  .track .icon {
    width: 17px;
    height: 17px;
  }

  .playhead {
    position: absolute;
    right: -6px;
    bottom: 0;
    width: 12px;
    height: 33px;
  }

  .settings {
    margin: 4px 14px 0 auto;
  }
</style>
